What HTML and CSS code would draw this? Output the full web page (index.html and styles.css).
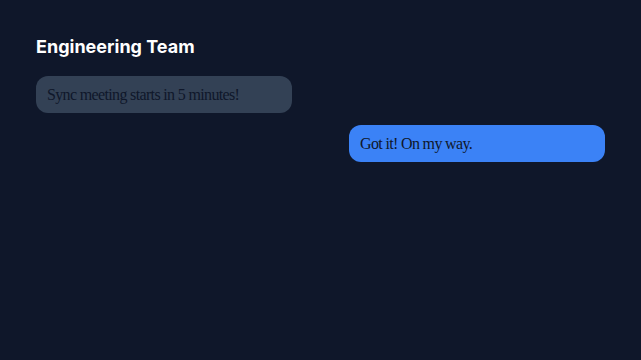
FILE: index.html
```html
<!DOCTYPE html>
<html>

<head>
  <meta charset="UTF-8" />
  <title>Engineering Team</title>
  <link rel="stylesheet" href="styles.css">
</head>

<body>
  <div class="chat">
    <h2>Engineering Team</h2>

    <div class="messages">
      <div class="bubble incoming">Sync meeting starts in 5 minutes!</div>
      <div class="bubble outgoing">Got it! On my way.</div>
    </div>
  </div>
</body>

</html>
```

FILE: styles.css
```css
body {
  margin: 0;
  background-color: #0f172a;
  font-family: "Liberation Serif", serif;
}

.chat {
  padding: 36px;
  display: flex;
  flex-direction: column;
  gap: 18px;
}

h2 {
  margin: 0;
  font-family: Inter, "Liberation Sans", sans-serif;
  font-size: 18px;
  font-weight: 700;
  line-height: 22px;
  color: #ffffff;
}

.messages {
  display: flex;
  flex-direction: column;
  gap: 12px;
}

.bubble {
  width: 256px;
  box-sizing: border-box;
  padding: 10px 11px;
  border-radius: 12px;
  font-size: 16px;
  line-height: 17px;
  letter-spacing: -0.65px;
  color: #0f172a;
}

.incoming {
  align-self: flex-start;
  background-color: #334155;
}

.outgoing {
  align-self: flex-end;
  background-color: #3b82f6;
}
```
